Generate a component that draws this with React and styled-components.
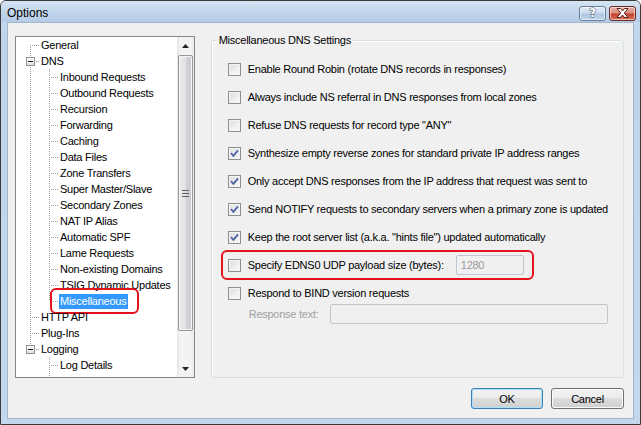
import React from "react";
import styled, { createGlobalStyle } from "styled-components";

const GlobalStyle = createGlobalStyle`
  html, body {
    margin: 0;
    padding: 0;
    background: #ffffff;
  }
  * {
    box-sizing: border-box;
  }
`;

const dot = "#a0a0a0";

const treeItems = [
  { label: "General", guides: [{ v: "bottom", h: true }] },
  { label: "DNS", guides: [{ v: "full", h: true, box: true }] },
  ...[
    "Inbound Requests",
    "Outbound Requests",
    "Recursion",
    "Forwarding",
    "Caching",
    "Data Files",
    "Zone Transfers",
    "Super Master/Slave",
    "Secondary Zones",
    "NAT IP Alias",
    "Automatic SPF",
    "Lame Requests",
    "Non-existing Domains",
    "TSIG Dynamic Updates",
  ].map((label) => ({
    label,
    guides: [{ v: "full" }, { v: "full", h: true }],
  })),
  {
    label: "Miscellaneous",
    selected: true,
    callout: true,
    guides: [{ v: "full" }, { v: "top", h: true }],
  },
  { label: "HTTP API", guides: [{ v: "full", h: true }] },
  { label: "Plug-Ins", guides: [{ v: "full", h: true }] },
  { label: "Logging", guides: [{ v: "top", h: true, box: true }] },
  { label: "Log Details", guides: [{ v: "none" }, { v: "full", h: true }] },
  // the list is scrolled: only the guide line of the next child shows
  { label: "", guides: [{ v: "none" }, { v: "full" }] },
];

const options = [
  { label: "Enable Round Robin (rotate DNS records in responses)", checked: false },
  { label: "Always include NS referral in DNS responses from local zones", checked: false },
  { label: 'Refuse DNS requests for record type "ANY"', checked: false },
  { label: "Synthesize empty reverse zones for standard private IP address ranges", checked: true },
  { label: "Only accept DNS responses from the IP address that request was sent to", checked: true },
  { label: "Send NOTIFY requests to secondary servers when a primary zone is updated", checked: true },
  { label: 'Keep the root server list (a.k.a. "hints file") updated automatically', checked: true },
];

const Window = styled.div`
  width: 641px;
  height: 425px;
  display: flex;
  flex-direction: column;
  border: 1px solid #3a3a3a;
  border-radius: 6px 6px 0 0;
  background: linear-gradient(to bottom, #c6d9ee 0, #bfd4ec 40px, #c3d7ed 100%);
  font-family: "Liberation Sans", Arial, sans-serif;
  font-size: 11px;
  letter-spacing: -0.25px;
  color: #000;
  overflow: hidden;
`;

const TitleBar = styled.div`
  height: 21px;
  flex: none;
  display: flex;
  align-items: center;
  padding: 0 4px 0 6px;
  background: linear-gradient(to bottom, #d7e4f2 0%, #c3d6ec 50%, #b4cbe6 100%);
`;

const Title = styled.div`
  flex: 1;
  font-size: 12px;
  letter-spacing: 0;
  padding-top: 2px;
  color: #000;
`;

const CaptionButton = styled.div`
  width: 27px;
  height: 15px;
  margin-left: 3px;
  margin-top: 3px;
  border: 1px solid ${(p) => (p.$close ? "#6b2a21" : "#6a7d97")};
  border-radius: 3px;
  display: flex;
  align-items: center;
  justify-content: center;
  box-shadow: inset 0 0 0 1px rgba(255, 255, 255, 0.55);
  background: ${(p) =>
    p.$close
      ? "linear-gradient(to bottom, #e8b0a6 0%, #d98d7f 45%, #c4412c 55%, #d7745f 100%)"
      : "linear-gradient(to bottom, #e3ecf6 0%, #cbdbee 45%, #aec6e2 55%, #c2d6ec 100%)"};
`;

const HelpGlyph = styled.span`
  font-family: "DejaVu Sans", sans-serif;
  font-weight: bold;
  font-size: 12px;
  line-height: 12px;
  color: #fff;
  -webkit-text-stroke: 1px #3f4c63;
  paint-order: stroke fill;
`;

const Client = styled.div`
  flex: 1;
  margin: 0 6px 5px 6px;
  border: 1px solid #a4b6ca;
  background: #f0f0f0;
  padding: 13px 9px 9px 7px;
  display: flex;
  flex-direction: column;
`;

const Body = styled.div`
  display: flex;
  height: 342px;
  gap: 16px;
`;

const Tree = styled.div`
  width: 180px;
  height: 342px;
  border: 1px solid #828790;
  background: #fff;
  display: flex;
`;

const TreeList = styled.div`
  flex: 1;
  overflow: hidden;
  padding-left: 5px;
`;

const Row = styled.div`
  position: relative;
  display: flex;
  height: 16px;
  white-space: nowrap;
`;

const vLine = (v) => {
  if (v === "full") return `repeating-linear-gradient(to bottom, ${dot} 0 1px, transparent 1px 2px) 9px 0 / 1px 16px no-repeat`;
  if (v === "top") return `repeating-linear-gradient(to bottom, ${dot} 0 1px, transparent 1px 2px) 9px 0 / 1px 8px no-repeat`;
  if (v === "bottom") return `repeating-linear-gradient(to bottom, ${dot} 0 1px, transparent 1px 2px) 9px 8px / 1px 8px no-repeat`;
  return null;
};

const Guide = styled.span`
  width: 19px;
  flex: none;
  display: flex;
  align-items: center;
  background: ${(p) =>
    [
      p.$h ? `repeating-linear-gradient(to right, ${dot} 0 1px, transparent 1px 2px) 11px 8px / 8px 1px no-repeat` : null,
      vLine(p.$v),
    ]
      .filter(Boolean)
      .join(", ") || "none"};
`;

const Expander = styled.span`
  width: 9px;
  height: 9px;
  margin-left: 5px;
  margin-top: 1px;
  border: 1px solid #919191;
  background: linear-gradient(to bottom, #ffffff, #e2e2e2);
  display: flex;
  align-items: center;
  justify-content: center;

  &::after {
    content: "";
    width: 5px;
    height: 1px;
    background: #1f1f1f;
  }
`;

const ItemLabel = styled.span`
  height: 15px;
  line-height: 15px;
  margin-top: 1px;
  padding: 0 2px 0 1px;
  background: ${(p) => (p.$selected ? "#3399ff" : "transparent")};
  color: ${(p) => (p.$selected ? "#fff" : "#000")};
`;

const Callout = styled.span`
  position: absolute;
  border: 2px solid #e3141c;
  border-radius: 6px;
  left: ${(p) => p.$left}px;
  top: ${(p) => p.$top}px;
  width: ${(p) => p.$width}px;
  height: ${(p) => p.$height}px;
  pointer-events: none;
`;

const ScrollBar = styled.div`
  width: 17px;
  flex: none;
  display: flex;
  flex-direction: column;
  background: linear-gradient(to right, #e3e3e3 0, #f3f3f3 3px, #f3f3f3 14px, #e8e8e8 100%);
`;

const Arrow = styled.div`
  height: 17px;
  display: flex;
  align-items: center;
  justify-content: center;
`;

const Track = styled.div`
  flex: 1;
  padding: 1px 1px;
  display: flex;
  flex-direction: column;
`;

const Thumb = styled.div`
  height: 276px;
  border: 1px solid #979797;
  border-radius: 2px;
  background: linear-gradient(to right, #ececec 0%, #e2e2e5 50%, #d3d3da 51%, #cacad2 100%);
  box-shadow: inset 0 0 0 1px #f6f6f6;
  display: flex;
  align-items: center;
  justify-content: center;
`;

const Group = styled.div`
  position: relative;
  width: 414px;
  height: 338px;
  margin-top: 4px;
  border: 1px solid #d5dfe5;
  border-radius: 3px;
  box-shadow: inset 1px 1px 0 #ffffff;
  padding: 14px 0 0 16px;
`;

const Legend = styled.span`
  position: absolute;
  left: 5px;
  top: -8px;
  padding: 0 2px;
  background: #f0f0f0;
  line-height: 14px;
`;

const OptionRow = styled.div`
  position: relative;
  height: ${(p) => (p.$compact ? 24 : 28)}px;
  margin-top: ${(p) => (p.$compact ? -5 : 0)}px;
  display: flex;
  align-items: center;
  white-space: nowrap;
  color: ${(p) => (p.$disabled ? "#a0a0a0" : "#000")};
`;

const Box = styled.span`
  width: 13px;
  height: 13px;
  flex: none;
  margin-right: 7px;
  border: 1px solid #8e8f8f;
  background: linear-gradient(135deg, #dcdcdc 0%, #f0f0f0 60%, #fbfbfb 100%);
  box-shadow: inset 0 0 0 1px #f4f4f4;
  display: flex;
  align-items: center;
  justify-content: center;
`;

const TextBox = styled.div`
  width: ${(p) => p.$width}px;
  height: 20px;
  margin-left: ${(p) => p.$gap}px;
  border: 1px solid #c2c6cc;
  border-radius: 2px;
  background: #f0f0f0;
  color: #9a9a9a;
  padding: 0 4px;
  line-height: 18px;
`;

const FieldLabel = styled.span`
  width: 102px;
  padding-left: 21px;
  flex: none;
`;

const Buttons = styled.div`
  display: flex;
  justify-content: flex-end;
  gap: 8px;
  margin-top: 10px;
`;

const Button = styled.div`
  width: ${(p) => p.$width}px;
  height: 21px;
  border: 1px solid ${(p) => (p.$default ? "#3c7fb1" : "#707070")};
  border-radius: 3px;
  display: flex;
  align-items: center;
  justify-content: center;
  font-size: 11px;
  color: #000;
  box-shadow: inset 0 0 0 1px ${(p) => (p.$default ? "#a7e1fb" : "#fbfbfb")};
  background: linear-gradient(to bottom, #f2f2f2 0%, #ebebeb 49%, #dddddd 50%, #cfcfcf 100%);
`;

function Check() {
  return (
    <svg width="9" height="9" viewBox="0 0 9 9">
      <path d="M1 4.2 L3.4 6.8 L8 1.3" fill="none" stroke="#4d64a6" strokeWidth="1.8" />
    </svg>
  );
}

function TreeRow({ item }) {
  return (
    <Row>
      {item.guides.map((g, i) => (
        <Guide key={i} $v={g.v} $h={g.h}>
          {g.box && <Expander />}
        </Guide>
      ))}
      {item.label && <ItemLabel $selected={item.selected}>{item.label}</ItemLabel>}
      {item.callout && <Callout $left={29} $top={-5} $width={89} $height={26} />}
    </Row>
  );
}

function OptionsTree() {
  return (
    <Tree>
      <TreeList>
        {treeItems.map((item, i) => (
          <TreeRow key={i} item={item} />
        ))}
      </TreeList>
      <ScrollBar>
        <Arrow>
          <svg width="7" height="4" viewBox="0 0 7 4">
            <path d="M0 4 L3.5 0 L7 4 Z" fill="#202020" />
          </svg>
        </Arrow>
        <Track>
          <Thumb>
            <svg width="7" height="7" viewBox="0 0 7 7">
              <path d="M0 0.5 H7 M0 3.5 H7 M0 6.5 H7" stroke="#5e5e66" strokeWidth="1" />
            </svg>
          </Thumb>
        </Track>
        <Arrow>
          <svg width="7" height="4" viewBox="0 0 7 4">
            <path d="M0 0 L7 0 L3.5 4 Z" fill="#202020" />
          </svg>
        </Arrow>
      </ScrollBar>
    </Tree>
  );
}

function Settings() {
  return (
    <Group>
      <Legend>Miscellaneous DNS Settings</Legend>
      {options.map((o) => (
        <OptionRow key={o.label}>
          <Box>{o.checked && <Check />}</Box>
          {o.label}
        </OptionRow>
      ))}
      <OptionRow>
        <Box />
        Specify EDNS0 UDP payload size (bytes):
        <TextBox $width={68} $gap={12}>1280</TextBox>
        <Callout $left={-7} $top={-1} $width={313} $height={30} />
      </OptionRow>
      <OptionRow>
        <Box />
        Respond to BIND version requests
      </OptionRow>
      <OptionRow $disabled $compact>
        <FieldLabel>Response text:</FieldLabel>
        <TextBox $width={278} $gap={0} />
      </OptionRow>
    </Group>
  );
}

export default function App() {
  return (
    <>
      <GlobalStyle />
      <Window>
        <TitleBar>
          <Title>Options</Title>
          <CaptionButton>
            <HelpGlyph>?</HelpGlyph>
          </CaptionButton>
          <CaptionButton $close>
            <svg width="13" height="10" viewBox="0 0 13 10">
              <path
                d="M1 0.5 H4.5 L6.5 3 L8.5 0.5 H12 L8.3 5 L12 9.5 H8.5 L6.5 7 L4.5 9.5 H1 L4.7 5 Z"
                fill="#ffffff"
                stroke="#5a2018"
                strokeWidth="1"
              />
            </svg>
          </CaptionButton>
        </TitleBar>
        <Client>
          <Body>
            <OptionsTree />
            <Settings />
          </Body>
          <Buttons>
            <Button $width={72} $default>OK</Button>
            <Button $width={73}>Cancel</Button>
          </Buttons>
        </Client>
      </Window>
    </>
  );
}
